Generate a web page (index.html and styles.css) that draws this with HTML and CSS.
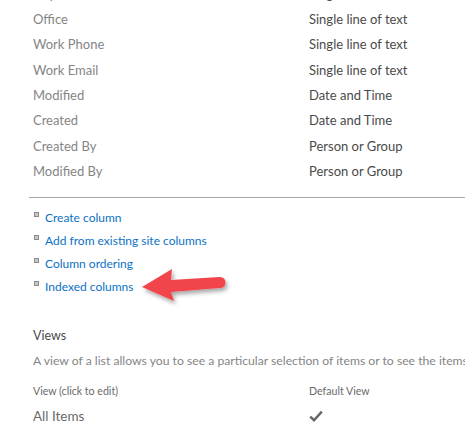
FILE: index.html
```html
<!DOCTYPE html>
<html>
<head>
<meta charset="utf-8">
<link rel="stylesheet" href="styles.css">
</head>
<body>
<div class="page">
  <div class="fields">
    <div class="row"><span class="name">Department</span><span class="type">Single line of text</span></div>
    <div class="row"><span class="name">Office</span><span class="type">Single line of text</span></div>
    <div class="row"><span class="name">Work Phone</span><span class="type">Single line of text</span></div>
    <div class="row"><span class="name">Work Email</span><span class="type">Single line of text</span></div>
    <div class="row"><span class="name">Modified</span><span class="type">Date and Time</span></div>
    <div class="row"><span class="name">Created</span><span class="type">Date and Time</span></div>
    <div class="row"><span class="name">Created By</span><span class="type">Person or Group</span></div>
    <div class="row"><span class="name">Modified By</span><span class="type">Person or Group</span></div>
  </div>
  <div class="rule"></div>
  <ul class="links">
    <li><span class="bullet"></span><a href="#">Create column</a></li>
    <li><span class="bullet"></span><a href="#">Add from existing site columns</a></li>
    <li><span class="bullet"></span><a href="#">Column ordering</a></li>
    <li class="indexed"><span class="bullet"></span><a href="#">Indexed columns</a>
      <svg class="arrow" width="100" height="45" viewBox="0 0 100 45">
        <defs>
          <filter id="sh" x="-20%" y="-30%" width="150%" height="180%">
            <feDropShadow dx="2" dy="3" stdDeviation="2" flood-color="#000" flood-opacity="0.35"/>
          </filter>
        </defs>
        <path filter="url(#sh)" d="M2 22 L32 4 L31 15 L80 12 A5.5 5.5 0 0 1 80 23 L31 27 L34 36 Z" fill="#f2454b"/>
      </svg>
    </li>
  </ul>
  <div class="views">
    <h2 class="views-title">Views</h2>
    <p class="views-desc">A view of a list allows you to see a particular selection of items or to see the items sorted in a particular order.</p>
    <div class="vhead"><span class="vname">View (click to edit)</span><span class="vdef">Default View</span></div>
    <div class="vrow"><span class="vname">All Items</span><span class="vdef">
      <svg width="14" height="12" viewBox="0 0 14 12"><path d="M1.2 6.6 L5 10.2 L12.8 1.6" fill="none" stroke="#666" stroke-width="2.4"/></svg>
    </span></div>
  </div>
</div>
</body>
</html>
```
FILE: styles.css
```css
html, body {
  margin: 0;
  padding: 0;
  background: #fff;
  overflow: hidden;
}
body {
  font-family: Lato, "Open Sans", sans-serif;
  font-size: 13px;
}
.page {
  width: 465px;
  height: 431px;
  overflow: hidden;
}
.fields {
  margin-top: -19px;
  padding-left: 33px;
}
.row {
  display: flex;
  height: 25.33px;
  align-items: center;
}
.name {
  width: 276px;
  color: #858585;
}
.type {
  color: #4a4a4a;
  white-space: nowrap;
}
.rule {
  margin: 13px 0 0 29px;
  height: 1px;
  background: #a6a6a6;
}
.links {
  list-style: none;
  margin: 8px 0 0 0;
  padding: 0 0 0 34px;
}
.links li {
  display: flex;
  align-items: center;
  height: 23px;
  position: relative;
}
.links a {
  color: #0a72c4;
  text-decoration: none;
  font-size: 12px;
}
.bullet {
  width: 3px;
  height: 3px;
  border: 1px solid #8a8a8a;
  background: #c8c8c8;
  margin-right: 6px;
  margin-top: -5px;
}
.arrow {
  position: absolute;
  left: 106px;
  top: -10px;
}
.views {
  padding-left: 33px;
  margin-top: 28px;
}
.views-title {
  margin: 0;
  font-weight: normal;
  font-size: 12.5px;
  color: #4a4a4a;
  height: 20px;
  line-height: 20px;
}
.views-desc {
  margin: 5px 0 0 0;
  color: #858585;
  font-size: 12.2px;
  white-space: nowrap;
  height: 20px;
  line-height: 20px;
}
.vhead {
  display: flex;
  margin-top: 10px;
  height: 20px;
  align-items: center;
  font-size: 10.6px;
  color: #6a6a6a;
}
.vrow {
  display: flex;
  margin-top: 5px;
  height: 20px;
  align-items: center;
  font-size: 13.5px;
  color: #6a6a6a;
}
.vname {
  width: 276px;
}
.vdef {
  display: flex;
  align-items: center;
}
```
